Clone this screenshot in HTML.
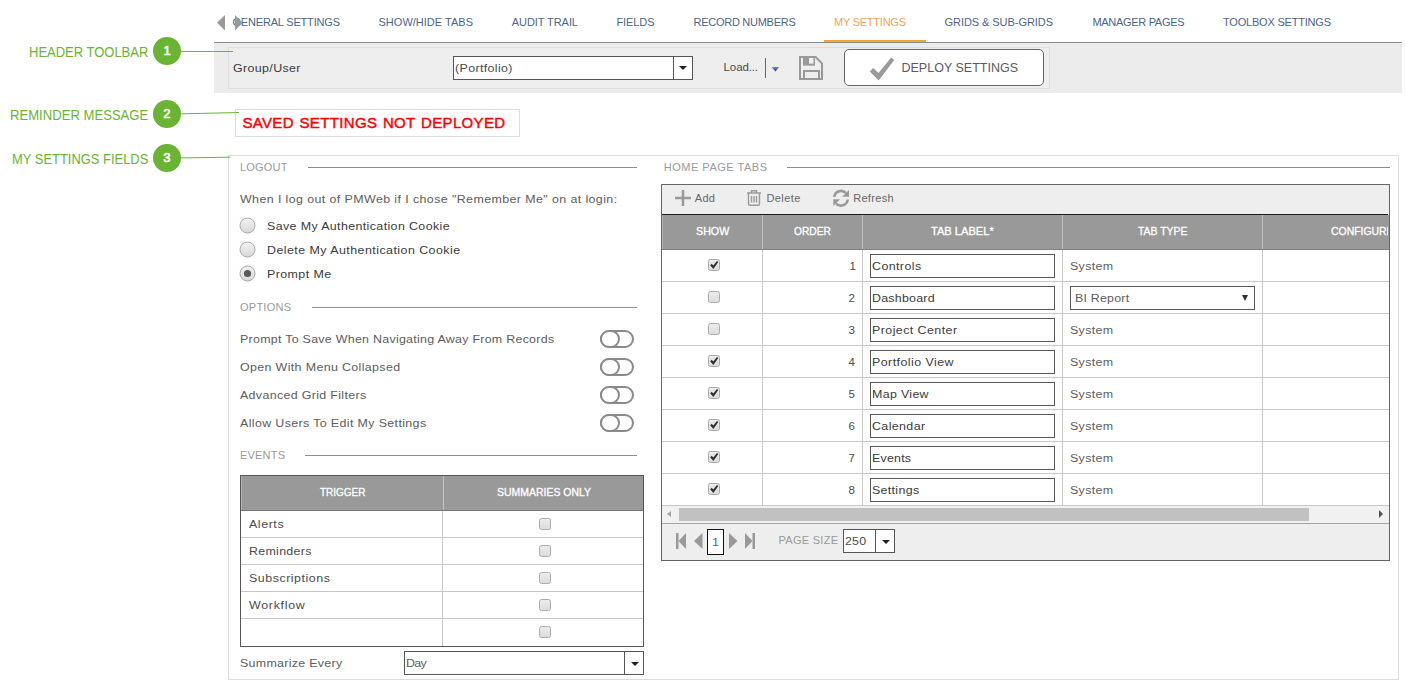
<!DOCTYPE html>
<html lang="en">
<head>
<meta charset="utf-8">
<title>My Settings</title>
<style>
html,body{margin:0;padding:0;background:#fff;}
body{width:1405px;height:692px;position:relative;overflow:hidden;font-family:'Liberation Sans',sans-serif;}
.a{position:absolute;box-sizing:border-box;}
.t{position:absolute;white-space:pre;transform-origin:0 50%;line-height:16px;height:16px;font-family:'Liberation Sans',sans-serif;}
.ln{position:absolute;height:1px;background:#8c8c8c;}
.cb{position:absolute;box-sizing:border-box;width:12px;height:12px;border:1px solid #aaa;border-radius:2.5px;background:linear-gradient(#ececec,#dcdcdc);}
.cb svg{position:absolute;left:0;top:0;}
.rd{position:absolute;box-sizing:border-box;width:16px;height:16px;border:1px solid #a8a8a8;border-radius:50%;background:linear-gradient(#f0f0f0,#dadada);}
.tg{position:absolute;box-sizing:border-box;width:34px;height:18px;border:2px solid #8a8a8a;border-radius:9px;left:600px;background:#fff;}
.tg i{position:absolute;box-sizing:border-box;left:-2px;top:-2px;width:20px;height:18px;border:2px solid #8a8a8a;border-radius:9px;background:#fff;}
.inp{position:absolute;box-sizing:border-box;left:870px;width:185px;height:24px;border:1px solid #555;background:#fff;}
.hl{position:absolute;height:1px;background:#c8c8c8;}
.vl{position:absolute;width:1px;background:#c8c8c8;}
.combo{position:absolute;box-sizing:border-box;border:1px solid #555;background:#fff;}
.combo b{position:absolute;top:0;bottom:0;width:1px;background:#555;}
.combo s{position:absolute;width:0;height:0;border-left:4px solid transparent;border-right:4px solid transparent;border-top:4px solid #222;}
</style>
</head>
<body>
<!-- tab strip -->
<div class="a" style="left:824px;top:40px;width:102px;height:3px;background:#f5a536"></div>
<!-- header toolbar band -->
<div class="a" style="left:214px;top:42px;width:1188px;height:51px;background:#ececec;border-top:1px solid #8a8a8a"></div>
<div class="a" style="left:824px;top:40px;width:102px;height:2px;background:#f5a536"></div>
<div class="a" style="left:228px;top:47px;width:822px;height:42px;border:1px solid #dedede;background:#eeeeee"></div>
<div class="combo" style="left:453px;top:56px;width:240px;height:24px"><b style="left:219px"></b><s style="left:225px;top:9px"></s></div>
<div class="a" style="left:765px;top:58px;width:1px;height:20px;background:#5563a0"></div>
<svg class="a" style="left:770px;top:65px" width="12" height="9" viewBox="770 65 12 9"><defs><linearGradient id="lg" x1="0" y1="0" x2="0" y2="1"><stop offset="0" stop-color="#7382d0"/><stop offset="1" stop-color="#27307a"/></linearGradient></defs><polygon points="771.7,67 779.1,67 775.4,71.5" fill="url(#lg)"/></svg>
<svg class="a" style="left:798px;top:55px" width="27" height="27" viewBox="798 55 27 27"><path d="M800 57 H815.6 L822 63.4 V79 H800 Z" fill="none" stroke="#999" stroke-width="2"/><rect x="803" y="57" width="12" height="8.6" fill="#999"/><rect x="809" y="58" width="4.5" height="5.6" fill="#f0f0f0"/><path d="M804 79 V71 H819 V79" fill="none" stroke="#999" stroke-width="2"/></svg>
<div class="a" style="left:844px;top:49px;width:200px;height:37px;border:1px solid #666;border-radius:5px;background:#fff"></div>
<svg class="a" style="left:868px;top:56px" width="28" height="26" viewBox="868 56 28 26"><polygon points="869.8,71.4 873.2,68.1 878.5,73.1 891.2,57.5 894.3,60 878.7,80.5" fill="#999"/></svg>
<!-- reminder -->
<div class="a" style="left:235px;top:109px;width:285px;height:28px;border:1px solid #dcdcdc;background:#fff"></div>
<!-- fieldset -->
<div class="a" style="left:228px;top:155px;width:1171px;height:525px;border:1px solid #dcdcdc"></div>
<div class="ln" style="left:308px;top:167px;width:329px"></div>
<div class="ln" style="left:312px;top:307px;width:325px"></div>
<div class="ln" style="left:305px;top:455px;width:332px"></div>
<div class="ln" style="left:787px;top:167px;width:603px"></div>
<!-- radios -->
<svg class="a" style="left:236px;top:214px" width="24" height="70" viewBox="236 214 24 70"><defs><linearGradient id="rg" x1="0" y1="0" x2="0" y2="1"><stop offset="0" stop-color="#f2f2f2"/><stop offset="1" stop-color="#d8d8d8"/></linearGradient></defs>
<circle cx="247.5" cy="225.5" r="7.5" fill="url(#rg)" stroke="#a6a6a6"/><circle cx="247.5" cy="249.5" r="7.5" fill="url(#rg)" stroke="#a6a6a6"/><circle cx="247.5" cy="273.5" r="7.5" fill="url(#rg)" stroke="#a6a6a6"/><circle cx="247.5" cy="273.5" r="3.6" fill="#5a5a5a"/></svg>
<!-- toggles -->
<div class="tg" style="top:330px"><i></i></div>
<div class="tg" style="top:358px"><i></i></div>
<div class="tg" style="top:386px"><i></i></div>
<div class="tg" style="top:414px"><i></i></div>
<!-- events table -->
<div class="a" style="left:240px;top:475px;width:404px;height:172px;border:1px solid #555;background:#fff"></div>
<div class="a" style="left:241px;top:476px;width:402px;height:34px;background:#999"></div>
<div class="a" style="left:241px;top:510px;width:402px;height:1px;background:#777"></div>
<div class="a" style="left:443px;top:476px;width:1px;height:34px;background:#c4c4c4"></div>
<div class="vl" style="left:442px;top:511px;height:135px"></div>
<div class="hl" style="left:241px;top:537px;width:402px"></div>
<div class="hl" style="left:241px;top:564px;width:402px"></div>
<div class="hl" style="left:241px;top:591px;width:402px"></div>
<div class="hl" style="left:241px;top:618px;width:402px"></div>
<div class="cb" style="left:539px;top:518px"></div>
<div class="cb" style="left:539px;top:545px"></div>
<div class="cb" style="left:539px;top:572px"></div>
<div class="cb" style="left:539px;top:599px"></div>
<div class="cb" style="left:539px;top:626px"></div>
<div class="combo" style="left:404px;top:651px;width:240px;height:24px"><b style="left:219px"></b><s style="left:226px;top:9.5px"></s></div>
<!-- grid -->
<div class="a" style="left:661px;top:184px;width:729px;height:377px;border:1px solid #666;background:#fff"></div>
<div class="a" style="left:662px;top:185px;width:727px;height:30px;background:#eeeeee"></div>
<div class="a" style="left:662px;top:214px;width:726px;height:1px;background:#1c1c1c"></div>
<div class="a" style="left:662px;top:215px;width:727px;height:34px;background:#999"></div>
<div class="a" style="left:662px;top:249px;width:727px;height:1px;background:#808080"></div>
<div class="a" style="left:762px;top:215px;width:1px;height:34px;background:#c0c0c0"></div>
<div class="vl" style="left:762px;top:250px;height:256px"></div>
<div class="a" style="left:862px;top:215px;width:1px;height:34px;background:#c0c0c0"></div>
<div class="vl" style="left:862px;top:250px;height:256px"></div>
<div class="a" style="left:1062px;top:215px;width:1px;height:34px;background:#c0c0c0"></div>
<div class="vl" style="left:1062px;top:250px;height:256px"></div>
<div class="a" style="left:1262px;top:215px;width:1px;height:34px;background:#c0c0c0"></div>
<div class="vl" style="left:1262px;top:250px;height:256px"></div>
<div class="hl" style="left:662px;top:281px;width:727px"></div>
<div class="hl" style="left:662px;top:313px;width:727px"></div>
<div class="hl" style="left:662px;top:345px;width:727px"></div>
<div class="hl" style="left:662px;top:377px;width:727px"></div>
<div class="hl" style="left:662px;top:409px;width:727px"></div>
<div class="hl" style="left:662px;top:441px;width:727px"></div>
<div class="hl" style="left:662px;top:473px;width:727px"></div>
<div class="hl" style="left:662px;top:505px;width:727px"></div>
<div class="cb" style="left:708px;top:259px"><svg width="10" height="10" viewBox="0 0 10 10"><path d="M1.1 5.2 L2.8 3.7 L4.2 5.4 L7.9 0.9 L9.3 2.1 L4.4 9 Z" fill="#333"/></svg></div>
<div class="inp" style="top:254px"></div>
<div class="cb" style="left:708px;top:291px"></div>
<div class="inp" style="top:286px"></div>
<div class="cb" style="left:708px;top:323px"></div>
<div class="inp" style="top:318px"></div>
<div class="cb" style="left:708px;top:355px"><svg width="10" height="10" viewBox="0 0 10 10"><path d="M1.1 5.2 L2.8 3.7 L4.2 5.4 L7.9 0.9 L9.3 2.1 L4.4 9 Z" fill="#333"/></svg></div>
<div class="inp" style="top:350px"></div>
<div class="cb" style="left:708px;top:387px"><svg width="10" height="10" viewBox="0 0 10 10"><path d="M1.1 5.2 L2.8 3.7 L4.2 5.4 L7.9 0.9 L9.3 2.1 L4.4 9 Z" fill="#333"/></svg></div>
<div class="inp" style="top:382px"></div>
<div class="cb" style="left:708px;top:419px"><svg width="10" height="10" viewBox="0 0 10 10"><path d="M1.1 5.2 L2.8 3.7 L4.2 5.4 L7.9 0.9 L9.3 2.1 L4.4 9 Z" fill="#333"/></svg></div>
<div class="inp" style="top:414px"></div>
<div class="cb" style="left:708px;top:451px"><svg width="10" height="10" viewBox="0 0 10 10"><path d="M1.1 5.2 L2.8 3.7 L4.2 5.4 L7.9 0.9 L9.3 2.1 L4.4 9 Z" fill="#333"/></svg></div>
<div class="inp" style="top:446px"></div>
<div class="cb" style="left:708px;top:483px"><svg width="10" height="10" viewBox="0 0 10 10"><path d="M1.1 5.2 L2.8 3.7 L4.2 5.4 L7.9 0.9 L9.3 2.1 L4.4 9 Z" fill="#333"/></svg></div>
<div class="inp" style="top:478px"></div>
<div class="a" style="left:1070px;top:286px;width:185px;height:24px;border:1px solid #555;background:#fff"></div>
<div class="a" style="left:1242px;top:295px;width:0;height:0;border-left:3.5px solid transparent;border-right:3.5px solid transparent;border-top:6.5px solid #333"></div>
<div class="a" style="left:662px;top:506px;width:727px;height:17px;background:#f1f1f1"></div>
<div class="a" style="left:679px;top:507.5px;width:630px;height:13.5px;background:#c1c1c1"></div>
<div class="a" style="left:667.3px;top:510.7px;width:0;height:0;border-top:3.8px solid transparent;border-bottom:3.8px solid transparent;border-right:4.8px solid #a3a3a3"></div>
<div class="a" style="left:1378.5px;top:510px;width:0;height:0;border-top:4px solid transparent;border-bottom:4px solid transparent;border-left:4.5px solid #505050"></div>
<div class="a" style="left:662px;top:523px;width:727px;height:1px;background:#a6a6a6"></div>
<div class="a" style="left:662px;top:524px;width:727px;height:36px;background:#eeeeee"></div>
<div class="a" style="left:662px;top:215px;width:1px;height:34px;background:#b4b4b4"></div>
<div class="a" style="left:241px;top:476px;width:1px;height:34px;background:#b4b4b4"></div>
<!-- grid toolbar icons -->
<svg class="a" style="left:674px;top:189px" width="18" height="18" viewBox="674 189 18 18"><path d="M675 198 H691 M683 190 V206" stroke="#999" stroke-width="2.5" fill="none"/></svg>
<svg class="a" style="left:746px;top:189px" width="16" height="18" viewBox="746 189 16 18"><path d="M747 193 H761 M751.5 193 V190.7 H756.5 V193 M748.5 193.5 V204 Q748.5 205.3 750 205.3 H758 Q759.5 205.3 759.5 204 V193.5 M751.5 196 V202.5 M754 196 V202.5 M756.5 196 V202.5" stroke="#999" stroke-width="1.4" fill="none"/></svg>
<svg class="a" style="left:832px;top:189px" width="18" height="18" viewBox="832 189 18 18"><path d="M834.3 197 A6.7 6.7 0 0 1 846 193.2 M847.7 199.5 A6.7 6.7 0 0 1 836 203.3" stroke="#999" stroke-width="2.6" fill="none"/><path d="M849 190 V196.8 H842.2 Z M833.3 206 V199.2 H840.1 Z" fill="#999"/></svg>
<!-- pager -->
<svg class="a" style="left:674px;top:530px" width="84" height="22" viewBox="674 530 84 22"><g fill="#999"><rect x="676" y="533" width="2.5" height="16"/><polygon points="686,533 686,549 678.5,541"/><polygon points="702.5,533 702.5,549 694,541"/><polygon points="729,533 729,549 737.5,541"/><polygon points="745,533 745,549 752.5,541"/><rect x="752.5" y="533" width="2.5" height="16"/></g></svg>
<div class="a" style="left:707px;top:529px;width:17px;height:26px;border:1px solid #111;background:#fff"></div>
<div class="combo" style="left:843px;top:529px;width:52px;height:24px"><b style="left:31px"></b><s style="left:38px;top:9.5px"></s></div>
<!-- annotations -->
<svg class="a" style="left:0;top:30px" width="260" height="150" viewBox="0 30 260 150">
<line x1="175" y1="51.5" x2="233" y2="51.5" stroke="#69b432" stroke-width="1"/>
<line x1="175" y1="114" x2="239" y2="112.5" stroke="#69b432" stroke-width="1"/>
<line x1="175" y1="158" x2="230.5" y2="157.2" stroke="#69b432" stroke-width="1"/>
<circle cx="167" cy="51" r="14" fill="#69b432"/><circle cx="167" cy="114" r="14" fill="#69b432"/><circle cx="167" cy="158" r="14" fill="#69b432"/>
</svg>
<div class="t" style="left:232.50px;top:14.19px;font-size:11px;color:#4b6587;letter-spacing:-0.182px;">GENERAL SETTINGS</div>
<div class="t" style="left:378.50px;top:14.19px;font-size:11px;color:#4b6587;letter-spacing:0.013px;">SHOW/HIDE TABS</div>
<div class="t" style="left:511.75px;top:14.19px;font-size:11px;color:#4b6587;letter-spacing:-0.059px;">AUDIT TRAIL</div>
<div class="t" style="left:616.50px;top:14.19px;font-size:11px;color:#4b6587;letter-spacing:-0.103px;">FIELDS</div>
<div class="t" style="left:693.50px;top:14.19px;font-size:11px;color:#4b6587;letter-spacing:-0.268px;">RECORD NUMBERS</div>
<div class="t" style="left:834.00px;top:14.19px;font-size:11px;color:#f0a35a;letter-spacing:-0.237px;">MY SETTINGS</div>
<div class="t" style="left:944.50px;top:14.19px;font-size:11px;color:#4b6587;letter-spacing:-0.057px;">GRIDS &amp; SUB-GRIDS</div>
<div class="t" style="left:1092.50px;top:14.19px;font-size:11px;color:#4b6587;letter-spacing:-0.314px;">MANAGER PAGES</div>
<div class="t" style="left:1223.00px;top:14.19px;font-size:11px;color:#4b6587;letter-spacing:-0.203px;">TOOLBOX SETTINGS</div>
<div class="t" style="left:29.00px;top:44.15px;font-size:14px;color:#69b432;transform:scaleX(0.9274);">HEADER TOOLBAR</div>
<div class="t" style="left:10.00px;top:107.15px;font-size:14px;color:#69b432;transform:scaleX(0.9356);">REMINDER MESSAGE</div>
<div class="t" style="left:12.00px;top:151.15px;font-size:14px;color:#69b432;transform:scaleX(0.9238);">MY SETTINGS FIELDS</div>
<div class="t" style="left:163.60px;top:43.30px;font-size:13px;color:#fff;letter-spacing:0.000px;-webkit-text-stroke:0.6px #fff;">1</div>
<div class="t" style="left:163.30px;top:106.30px;font-size:13px;color:#fff;letter-spacing:0.000px;-webkit-text-stroke:0.6px #fff;">2</div>
<div class="t" style="left:163.30px;top:150.30px;font-size:13px;color:#fff;letter-spacing:0.000px;-webkit-text-stroke:0.6px #fff;">3</div>
<div class="t" style="left:233.00px;top:60.02px;font-size:11.5px;color:#3a3a3a;letter-spacing:0.340px;transform:scaleX(1.08);">Group/User</div>
<div class="t" style="left:455.00px;top:60.02px;font-size:11.5px;color:#4a4a4a;letter-spacing:0.338px;transform:scaleX(1.08);">(Portfolio)</div>
<div class="t" style="left:723.60px;top:59.22px;font-size:11.5px;color:#4a4a4a;letter-spacing:-0.129px;">Load...</div>
<div class="t" style="left:901.50px;top:59.67px;font-size:12.5px;color:#5a5a5a;letter-spacing:0.002px;">DEPLOY SETTINGS</div>
<div class="t" style="left:242.40px;top:115.00px;font-size:15px;color:#ff0000;letter-spacing:0.337px;-webkit-text-stroke:0.45px #ff0000;word-spacing:1.2px;">SAVED SETTINGS NOT DEPLOYED</div>
<div class="t" style="left:240.00px;top:159.19px;font-size:11px;color:#999;letter-spacing:0.209px;">LOGOUT</div>
<div class="t" style="left:240.00px;top:299.19px;font-size:11px;color:#999;letter-spacing:0.247px;">OPTIONS</div>
<div class="t" style="left:240.00px;top:447.19px;font-size:11px;color:#999;letter-spacing:0.197px;">EVENTS</div>
<div class="t" style="left:663.75px;top:159.19px;font-size:11px;color:#999;letter-spacing:0.513px;">HOME PAGE TABS</div>
<div class="t" style="left:239.90px;top:191.02px;font-size:11.5px;color:#5c5c5c;letter-spacing:0.371px;transform:scaleX(1.08);">When I log out of PMWeb if I chose &quot;Remember Me&quot; on at login:</div>
<div class="t" style="left:266.90px;top:218.02px;font-size:11.5px;color:#3a3a3a;letter-spacing:0.353px;transform:scaleX(1.08);">Save My Authentication Cookie</div>
<div class="t" style="left:266.90px;top:242.02px;font-size:11.5px;color:#3a3a3a;letter-spacing:0.419px;transform:scaleX(1.08);">Delete My Authentication Cookie</div>
<div class="t" style="left:266.90px;top:266.02px;font-size:11.5px;color:#3a3a3a;letter-spacing:0.388px;transform:scaleX(1.08);">Prompt Me</div>
<div class="t" style="left:239.90px;top:331.02px;font-size:11.5px;color:#5c5c5c;letter-spacing:0.254px;transform:scaleX(1.08);">Prompt To Save When Navigating Away From Records</div>
<div class="t" style="left:239.90px;top:359.02px;font-size:11.5px;color:#5c5c5c;letter-spacing:0.330px;transform:scaleX(1.08);">Open With Menu Collapsed</div>
<div class="t" style="left:239.90px;top:387.02px;font-size:11.5px;color:#5c5c5c;letter-spacing:0.309px;transform:scaleX(1.08);">Advanced Grid Filters</div>
<div class="t" style="left:239.90px;top:415.02px;font-size:11.5px;color:#5c5c5c;letter-spacing:0.340px;transform:scaleX(1.08);">Allow Users To Edit My Settings</div>
<div class="t" style="left:320.00px;top:483.76px;font-size:10.5px;color:#fff;transform:scaleX(0.9510);-webkit-text-stroke:0.3px #fff;">TRIGGER</div>
<div class="t" style="left:497.00px;top:483.76px;font-size:10.5px;color:#fff;transform:scaleX(0.9965);-webkit-text-stroke:0.3px #fff;">SUMMARIES ONLY</div>
<div class="t" style="left:248.65px;top:516.02px;font-size:11.5px;color:#4a4a4a;letter-spacing:0.526px;transform:scaleX(1.08);">Alerts</div>
<div class="t" style="left:248.65px;top:543.02px;font-size:11.5px;color:#4a4a4a;letter-spacing:0.265px;transform:scaleX(1.08);">Reminders</div>
<div class="t" style="left:248.65px;top:570.02px;font-size:11.5px;color:#4a4a4a;letter-spacing:0.485px;transform:scaleX(1.08);">Subscriptions</div>
<div class="t" style="left:248.65px;top:597.02px;font-size:11.5px;color:#4a4a4a;letter-spacing:0.662px;transform:scaleX(1.08);">Workflow</div>
<div class="t" style="left:239.90px;top:655.02px;font-size:11.5px;color:#5c5c5c;letter-spacing:0.271px;transform:scaleX(1.08);">Summarize Every</div>
<div class="t" style="left:406.40px;top:655.02px;font-size:11.5px;color:#5c5c5c;letter-spacing:-0.690px;transform:scaleX(1.08);">Day</div>
<div class="t" style="left:694.80px;top:190.19px;font-size:11px;color:#666;letter-spacing:0.311px;">Add</div>
<div class="t" style="left:766.40px;top:190.19px;font-size:11px;color:#666;letter-spacing:0.421px;">Delete</div>
<div class="t" style="left:853.20px;top:190.19px;font-size:11px;color:#666;letter-spacing:0.311px;">Refresh</div>
<div class="t" style="left:695.75px;top:222.86px;font-size:10.5px;color:#fff;transform:scaleX(1.0177);-webkit-text-stroke:0.3px #fff;">SHOW</div>
<div class="t" style="left:794.00px;top:222.86px;font-size:10.5px;color:#fff;transform:scaleX(0.9757);-webkit-text-stroke:0.3px #fff;">ORDER</div>
<div class="t" style="left:931.00px;top:222.86px;font-size:10.5px;color:#fff;transform:scaleX(1.0574);-webkit-text-stroke:0.3px #fff;">TAB LABEL*</div>
<div class="t" style="left:1138.00px;top:222.86px;font-size:10.5px;color:#fff;transform:scaleX(0.9940);-webkit-text-stroke:0.3px #fff;">TAB TYPE</div>
<div class="a" style="left:1331.00px;top:222.86px;width:57.00px;height:16px;overflow:hidden"><div class="t" style="left:0;top:0;font-size:10.5px;color:#fff;transform:scaleX(0.9921);-webkit-text-stroke:0.3px #fff;">CONFIGURE</div></div>
<div class="t" style="left:849.50px;top:258.02px;font-size:11.5px;color:#4a4a4a;letter-spacing:0.000px;">1</div>
<div class="t" style="left:871.90px;top:258.02px;font-size:11.5px;color:#3a3a3a;letter-spacing:0.376px;transform:scaleX(1.08);">Controls</div>
<div class="t" style="left:1069.90px;top:258.02px;font-size:11.5px;color:#5c5c5c;letter-spacing:0.313px;transform:scaleX(1.08);">System</div>
<div class="t" style="left:848.40px;top:290.02px;font-size:11.5px;color:#4a4a4a;letter-spacing:0.000px;">2</div>
<div class="t" style="left:871.90px;top:290.02px;font-size:11.5px;color:#3a3a3a;letter-spacing:0.212px;transform:scaleX(1.08);">Dashboard</div>
<div class="t" style="left:848.40px;top:322.02px;font-size:11.5px;color:#4a4a4a;letter-spacing:0.000px;">3</div>
<div class="t" style="left:871.90px;top:322.02px;font-size:11.5px;color:#3a3a3a;letter-spacing:0.406px;transform:scaleX(1.08);">Project Center</div>
<div class="t" style="left:1069.90px;top:322.02px;font-size:11.5px;color:#5c5c5c;letter-spacing:0.313px;transform:scaleX(1.08);">System</div>
<div class="t" style="left:848.40px;top:354.02px;font-size:11.5px;color:#4a4a4a;letter-spacing:0.000px;">4</div>
<div class="t" style="left:871.90px;top:354.02px;font-size:11.5px;color:#3a3a3a;letter-spacing:0.419px;transform:scaleX(1.08);">Portfolio View</div>
<div class="t" style="left:1069.90px;top:354.02px;font-size:11.5px;color:#5c5c5c;letter-spacing:0.313px;transform:scaleX(1.08);">System</div>
<div class="t" style="left:848.40px;top:386.02px;font-size:11.5px;color:#4a4a4a;letter-spacing:0.000px;">5</div>
<div class="t" style="left:871.90px;top:386.02px;font-size:11.5px;color:#3a3a3a;letter-spacing:0.302px;transform:scaleX(1.08);">Map View</div>
<div class="t" style="left:1069.90px;top:386.02px;font-size:11.5px;color:#5c5c5c;letter-spacing:0.313px;transform:scaleX(1.08);">System</div>
<div class="t" style="left:848.40px;top:418.02px;font-size:11.5px;color:#4a4a4a;letter-spacing:0.000px;">6</div>
<div class="t" style="left:871.90px;top:418.02px;font-size:11.5px;color:#3a3a3a;letter-spacing:0.356px;transform:scaleX(1.08);">Calendar</div>
<div class="t" style="left:1069.90px;top:418.02px;font-size:11.5px;color:#5c5c5c;letter-spacing:0.313px;transform:scaleX(1.08);">System</div>
<div class="t" style="left:848.40px;top:450.02px;font-size:11.5px;color:#4a4a4a;letter-spacing:0.000px;">7</div>
<div class="t" style="left:871.90px;top:450.02px;font-size:11.5px;color:#3a3a3a;letter-spacing:0.206px;transform:scaleX(1.08);">Events</div>
<div class="t" style="left:1069.90px;top:450.02px;font-size:11.5px;color:#5c5c5c;letter-spacing:0.313px;transform:scaleX(1.08);">System</div>
<div class="t" style="left:848.40px;top:482.02px;font-size:11.5px;color:#4a4a4a;letter-spacing:0.000px;">8</div>
<div class="t" style="left:871.90px;top:482.02px;font-size:11.5px;color:#3a3a3a;letter-spacing:0.293px;transform:scaleX(1.08);">Settings</div>
<div class="t" style="left:1069.90px;top:482.02px;font-size:11.5px;color:#5c5c5c;letter-spacing:0.313px;transform:scaleX(1.08);">System</div>
<div class="t" style="left:1074.90px;top:290.02px;font-size:11.5px;color:#5c5c5c;letter-spacing:0.189px;transform:scaleX(1.08);">BI Report</div>
<div class="t" style="left:712.20px;top:534.02px;font-size:11.5px;color:#2f6fb0;letter-spacing:0.000px;transform:scaleX(1.08);">1</div>
<div class="t" style="left:778.50px;top:532.19px;font-size:11px;color:#999;letter-spacing:0.279px;">PAGE SIZE</div>
<div class="t" style="left:844.90px;top:533.32px;font-size:11.5px;color:#4a4a4a;letter-spacing:0.175px;transform:scaleX(1.08);">250</div>
<svg class="a" style="left:214px;top:10px" width="34" height="26" viewBox="214 10 34 26"><polygon points="225,15 225,30.5 217,22.7" fill="#999"/><polygon points="235,15 235,30.5 242.6,22.7" fill="#999"/></svg>

</body>
</html>
